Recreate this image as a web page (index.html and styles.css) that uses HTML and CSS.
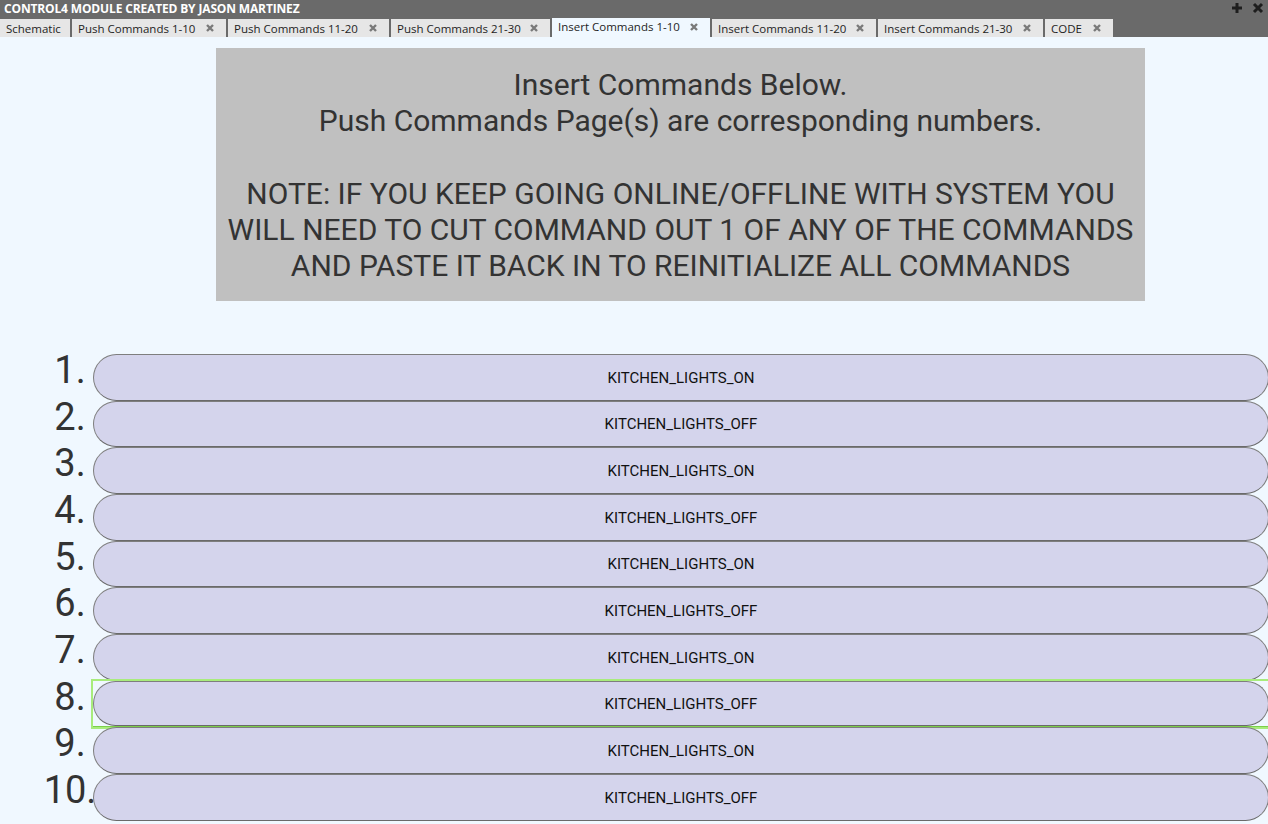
FILE: index.html
```html
<!DOCTYPE html>
<html>
<head>
<meta charset="utf-8">
<link rel="stylesheet" href="styles.css">
</head>
<body>
<div class="app">
  <div class="titlebar">
    <span class="title">CONTROL4 MODULE CREATED BY JASON MARTINEZ</span>
    <div class="win-icons">
      <svg class="wicon" viewBox="0 0 12 12" width="12" height="12"><path d="M6 1v10M1 6h10" stroke="#1e1e1e" stroke-width="3"/></svg>
      <svg class="wicon" viewBox="0 0 12 12" width="12" height="12"><path d="M2 2l8 8M10 2l-8 8" stroke="#1e1e1e" stroke-width="3"/></svg>
    </div>
  </div>
  <div class="tabbar">
    <div class="tab t-schematic"><span>Schematic</span></div>
    <div class="tab t-p1"><span>Push Commands 1-10</span><svg class="x" viewBox="0 0 8 8"><path d="M1 1l6 6M7 1l-6 6"/></svg></div>
    <div class="tab t-p11"><span>Push Commands 11-20</span><svg class="x" viewBox="0 0 8 8"><path d="M1 1l6 6M7 1l-6 6"/></svg></div>
    <div class="tab t-p21"><span>Push Commands 21-30</span><svg class="x" viewBox="0 0 8 8"><path d="M1 1l6 6M7 1l-6 6"/></svg></div>
    <div class="tab active t-i1"><span>Insert Commands 1-10</span><svg class="x" viewBox="0 0 8 8"><path d="M1 1l6 6M7 1l-6 6"/></svg></div>
    <div class="tab t-i11"><span>Insert Commands 11-20</span><svg class="x" viewBox="0 0 8 8"><path d="M1 1l6 6M7 1l-6 6"/></svg></div>
    <div class="tab t-i21"><span>Insert Commands 21-30</span><svg class="x" viewBox="0 0 8 8"><path d="M1 1l6 6M7 1l-6 6"/></svg></div>
    <div class="tab t-code"><span>CODE</span><svg class="x" viewBox="0 0 8 8"><path d="M1 1l6 6M7 1l-6 6"/></svg></div>
  </div>
  <main class="content">
    <div class="notice-wrap">
      <div class="notice">
        <p>Insert Commands Below.</p>
        <p>Push Commands Page(s) are corresponding numbers.</p>
        <p>&nbsp;</p>
        <p>NOTE: IF YOU KEEP GOING ONLINE/OFFLINE WITH SYSTEM YOU</p>
        <p>WILL NEED TO CUT COMMAND OUT 1 OF ANY OF THE COMMANDS</p>
        <p>AND PASTE IT BACK IN TO REINITIALIZE ALL COMMANDS</p>
      </div>
    </div>
    <div class="rows">
      <div class="row"><div class="num">1.</div><div class="slot"><div class="pill">KITCHEN_LIGHTS_ON</div></div></div>
      <div class="row"><div class="num">2.</div><div class="slot"><div class="pill">KITCHEN_LIGHTS_OFF</div></div></div>
      <div class="row"><div class="num">3.</div><div class="slot"><div class="pill">KITCHEN_LIGHTS_ON</div></div></div>
      <div class="row"><div class="num">4.</div><div class="slot"><div class="pill">KITCHEN_LIGHTS_OFF</div></div></div>
      <div class="row"><div class="num">5.</div><div class="slot"><div class="pill">KITCHEN_LIGHTS_ON</div></div></div>
      <div class="row"><div class="num">6.</div><div class="slot"><div class="pill">KITCHEN_LIGHTS_OFF</div></div></div>
      <div class="row"><div class="num">7.</div><div class="slot"><div class="pill">KITCHEN_LIGHTS_ON</div></div></div>
      <div class="row"><div class="num">8.</div><div class="slot focused"><div class="pill">KITCHEN_LIGHTS_OFF</div></div></div>
      <div class="row"><div class="num">9.</div><div class="slot"><div class="pill">KITCHEN_LIGHTS_ON</div></div></div>
      <div class="row"><div class="num">10.</div><div class="slot"><div class="pill">KITCHEN_LIGHTS_OFF</div></div></div>
    </div>
  </main>
</div>
</body>
</html>
```

FILE: styles.css
```css
* { box-sizing: border-box; }
html, body {
  margin: 0;
  padding: 0;
  width: 1268px;
  height: 824px;
  overflow: hidden;
  background: #f0f8ff;
}
.app {
  display: flex;
  flex-direction: column;
  height: 824px;
}
.titlebar {
  height: 18px;
  background: #6a6a6a;
  display: flex;
  align-items: center;
  justify-content: space-between;
  padding: 0 4px;
}
.title {
  font-family: "Open Sans", "Liberation Sans", sans-serif;
  font-weight: 700;
  font-size: 12px;
  letter-spacing: -0.15px;
  color: #ffffff;
  line-height: 18px;
}
.win-icons {
  display: flex;
  gap: 9px;
  align-items: center;
  margin-top: -2px;
}
.wicon { display: block; }
.tabbar {
  height: 19px;
  background: #6a6a6a;
  display: flex;
  align-items: flex-end;
  gap: 2px;
}
.tab {
  height: 18px;
  background: #e6e6e6;
  display: flex;
  align-items: center;
  justify-content: space-between;
  padding: 0 0 0 6px;
  font-family: "Open Sans", "Liberation Sans", sans-serif;
  font-size: 11.5px;
  color: #1e1e1e;
}
.tab.active {
  height: 19px;
  background: #f0f8ff;
  padding-bottom: 2px;
}
.tab .x {
  width: 8px;
  height: 8px;
  stroke: #7a7a7a;
  stroke-width: 2.4;
  margin-right: 12px;
}
.t-schematic { width: 70px; }
.t-p1 { width: 154px; }
.t-p11 { width: 161px; }
.t-p21 { width: 159px; }
.t-i1 { width: 158px; }
.t-i11 { width: 164px; }
.t-i21 { width: 165px; }
.t-code { width: 68px; }

.content {
  flex: 1;
  background: #f0f8ff;
  padding-top: 11px;
  display: flex;
  flex-direction: column;
}
.notice-wrap {
  padding-left: 93px;
  display: flex;
  justify-content: center;
}
.notice {
  width: 929px;
  height: 253px;
  background: #c0c0c0;
  padding: 19px 0 17px;
  text-align: center;
  font-family: Roboto, "Liberation Sans", sans-serif;
  font-size: 30px;
  line-height: 36.2px;
  color: #333333;
}
.notice p { margin: 0; white-space: nowrap; }
.rows {
  margin-top: 53px;
  display: flex;
  flex-direction: column;
}
.row {
  height: 46.67px;
  display: grid;
  grid-template-columns: 47px 46px 1fr;
}
.num {
  grid-column: 2;
  white-space: nowrap;
  display: flex;
  justify-content: center;
  font-family: Roboto, "Liberation Sans", sans-serif;
  font-size: 38px;
  line-height: 32px;
  color: #333333;
}
.slot {
  grid-column: 3;
  height: 46.67px;
}
.slot.focused {
  outline: 2px solid #a8ec7c;
  outline-offset: 0;
  border-bottom: 1px solid #7ccf4a;
}
.pill {
  height: 100%;
  background: #d4d4ec;
  border: 1px solid #7e7e7e;
  border-bottom-color: #6a6a6a;
  border-radius: 24px;
  display: flex;
  align-items: center;
  justify-content: center;
  padding-top: 1px;
  font-family: Roboto, "Liberation Sans", sans-serif;
  font-size: 15px;
  color: #111111;
  margin-right: -1px;
}
```
